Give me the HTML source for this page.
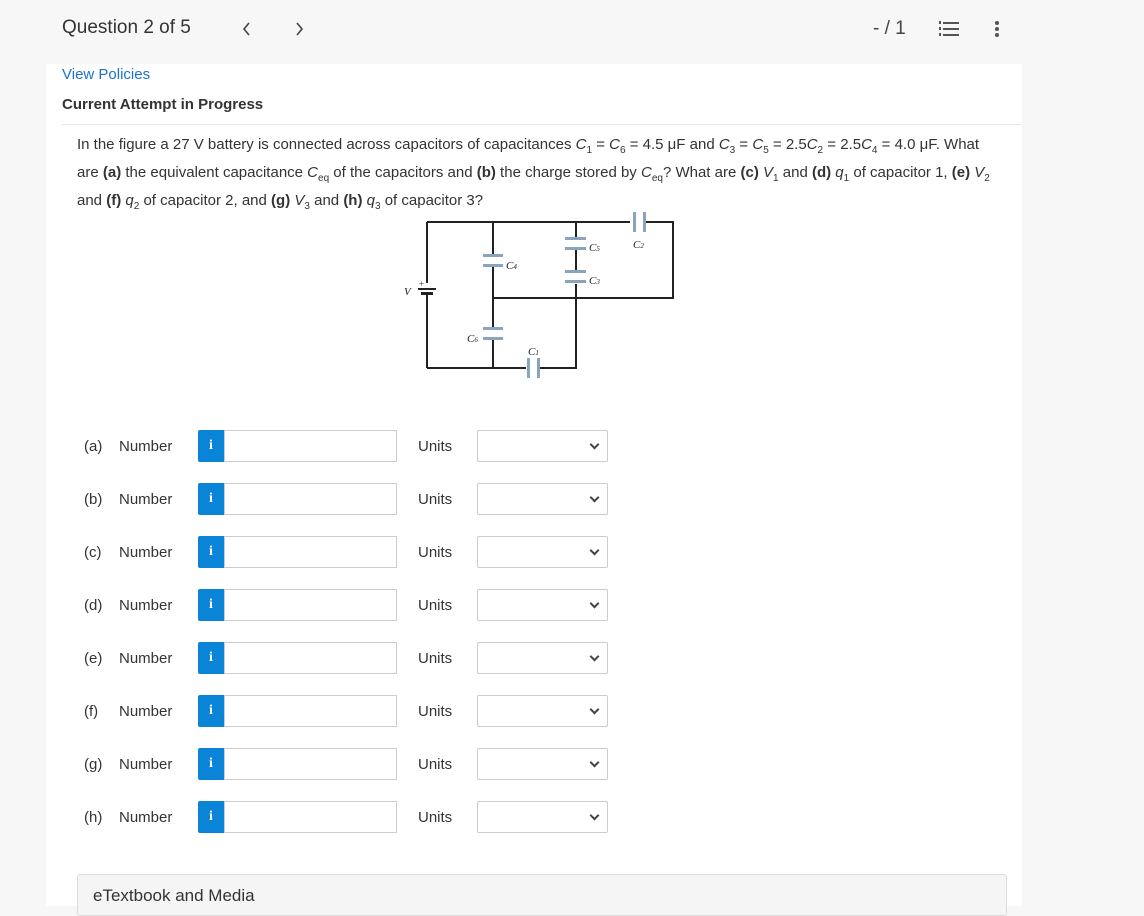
<!DOCTYPE html>
<html><head><style>
body{margin:0;background:#f7f7f7;font-family:"Liberation Sans",sans-serif;width:1144px;height:906px;overflow:hidden;position:relative;color:#333}
.hdr{position:absolute;left:62px;top:17px;font-size:19px;color:#333}
.panel{position:absolute;left:46px;top:64px;width:976px;height:842px;background:#fff}
a{color:#1a73c8;text-decoration:none}
.row{position:absolute;left:84px;height:32px;font-size:15px}
.row span{position:absolute;top:8px}
.ib{position:absolute;left:114px;top:0;width:26px;height:32px;background:#0a84d6;border-radius:2px 0 0 2px;color:#fff;font-weight:bold;font-family:"Liberation Serif",serif;font-size:14px;text-align:center;line-height:32px}
.in{position:absolute;left:140px;top:0;width:171px;height:30px;border:1px solid #ccc}
.sel{position:absolute;left:393px;top:0;width:129px;height:30px;border:1px solid #ccc;border-radius:2px}
.sel:after{content:"";position:absolute;right:9px;top:10px;width:5px;height:5px;border-right:2px solid #444;border-bottom:2px solid #444;transform:rotate(45deg)}
sub{font-size:10px}
</style></head><body>
<div class="hdr">Question 2 of 5</div>
<svg style="position:absolute;left:242px;top:22px" width="10" height="14"><path d="M7 1L2 7L7 13" stroke="#444" stroke-width="1.6" fill="none"/></svg>
<svg style="position:absolute;left:294px;top:22px" width="10" height="14"><path d="M3 1L8 7L3 13" stroke="#444" stroke-width="1.6" fill="none"/></svg>
<div style="position:absolute;left:873px;top:18px;font-size:19px;color:#444">- / 1</div>
<svg style="position:absolute;left:938px;top:20px" width="22" height="18"><g fill="#555"><rect x="5" y="2" width="16" height="2"/><rect x="5" y="8" width="16" height="2"/><rect x="5" y="14" width="16" height="2"/><rect x="1" y="1" width="2" height="3"/><rect x="1" y="7" width="2" height="3"/><rect x="1" y="13" width="2" height="3"/></g></svg>
<svg style="position:absolute;left:994px;top:20px" width="6" height="18"><g fill="#555"><circle cx="3" cy="3" r="2"/><circle cx="3" cy="9" r="2"/><circle cx="3" cy="15" r="2"/></g></svg>
<div class="panel"></div>
<div style="position:absolute;left:62px;top:66px;font-size:15px"><a>View Policies</a></div>
<div style="position:absolute;left:62px;top:96px;font-size:15px;font-weight:bold;color:#333">Current Attempt in Progress</div>
<div style="position:absolute;left:62px;top:124px;width:960px;height:1px;background:#e6e6e6"></div>
<div style="position:absolute;left:77px;top:134px;width:920px;font-size:15px;line-height:22px;color:#333">In the figure a 27 V battery is connected across capacitors of capacitances <i>C</i><sub>1</sub> = <i>C</i><sub>6</sub> = 4.5 μF and <i>C</i><sub>3</sub> = <i>C</i><sub>5</sub> = 2.5<i>C</i><sub>2</sub> = 2.5<i>C</i><sub>4</sub> = 4.0 μF. What are <b>(a)</b> the equivalent capacitance <i>C</i><sub>eq</sub> of the capacitors and <b>(b)</b> the charge stored by <i>C</i><sub>eq</sub>? What are <b>(c)</b> <i>V</i><sub>1</sub> and <b>(d)</b> <i>q</i><sub>1</sub> of capacitor 1, <b>(e)</b> <i>V</i><sub>2</sub> and <b>(f)</b> <i>q</i><sub>2</sub> of capacitor 2, and <b>(g)</b> <i>V</i><sub>3</sub> and <b>(h)</b> <i>q</i><sub>3</sub> of capacitor 3?</div>
<svg style="position:absolute;left:390px;top:205px" width="300" height="180">
<g stroke="#222" stroke-width="2" fill="none">
<path d="M37 17H283V93H103 M37 17V163 M103 17V163 M37 163H186V17"/>
</g>
<g fill="#fff"><rect x="36" y="78" width="4" height="12"/><rect x="240" y="10" width="14" height="12"/><rect x="136" y="155" width="14" height="14"/><rect x="94" y="50" width="18" height="12"/><rect x="177" y="33" width="18" height="12"/><rect x="177" y="67" width="18" height="12"/><rect x="94" y="123" width="18" height="12"/></g>
<g fill="#8aa4bd"><rect x="243" y="7" width="3" height="20"/><rect x="253" y="7" width="3" height="20"/><rect x="137" y="153" width="3" height="20"/><rect x="147" y="153" width="3" height="20"/>
<rect x="93" y="49" width="20" height="3"/><rect x="93" y="59" width="20" height="3"/><rect x="175" y="32" width="21" height="3"/><rect x="175" y="42" width="21" height="3"/><rect x="175" y="65" width="21" height="3"/><rect x="175" y="75" width="21" height="3"/><rect x="93" y="122" width="20" height="3"/><rect x="93" y="132" width="20" height="3"/></g>
<g fill="#222"><rect x="28" y="83" width="18" height="2"/><rect x="31" y="87" width="12" height="3"/></g>
<g font-family="Liberation Serif" font-style="italic" font-size="11" fill="#222"><text x="14" y="90">V</text><text x="29" y="82" font-size="9" font-style="normal">+</text><text x="116" y="64">C<tspan font-size="7">4</tspan></text><text x="199" y="46">C<tspan font-size="7">5</tspan></text><text x="199" y="79">C<tspan font-size="7">3</tspan></text><text x="243" y="43">C<tspan font-size="7">2</tspan></text><text x="77" y="137">C<tspan font-size="7">6</tspan></text><text x="138" y="150">C<tspan font-size="7">1</tspan></text></g>
</svg>
<div class="row" style="top:430px"><span>(a)</span><span style="left:35px">Number</span><div class="ib">i</div><div class="in"></div><span style="left:334px">Units</span><div class="sel"></div></div>
<div class="row" style="top:483px"><span>(b)</span><span style="left:35px">Number</span><div class="ib">i</div><div class="in"></div><span style="left:334px">Units</span><div class="sel"></div></div>
<div class="row" style="top:536px"><span>(c)</span><span style="left:35px">Number</span><div class="ib">i</div><div class="in"></div><span style="left:334px">Units</span><div class="sel"></div></div>
<div class="row" style="top:589px"><span>(d)</span><span style="left:35px">Number</span><div class="ib">i</div><div class="in"></div><span style="left:334px">Units</span><div class="sel"></div></div>
<div class="row" style="top:642px"><span>(e)</span><span style="left:35px">Number</span><div class="ib">i</div><div class="in"></div><span style="left:334px">Units</span><div class="sel"></div></div>
<div class="row" style="top:695px"><span>(f)</span><span style="left:35px">Number</span><div class="ib">i</div><div class="in"></div><span style="left:334px">Units</span><div class="sel"></div></div>
<div class="row" style="top:748px"><span>(g)</span><span style="left:35px">Number</span><div class="ib">i</div><div class="in"></div><span style="left:334px">Units</span><div class="sel"></div></div>
<div class="row" style="top:801px"><span>(h)</span><span style="left:35px">Number</span><div class="ib">i</div><div class="in"></div><span style="left:334px">Units</span><div class="sel"></div></div>
<div style="position:absolute;left:77px;top:874px;width:928px;height:40px;background:#f5f5f5;border:1px solid #ddd;border-radius:3px"><span style="position:absolute;left:15px;top:11px;font-size:17px;color:#333">eTextbook and Media</span></div>
</body></html>
